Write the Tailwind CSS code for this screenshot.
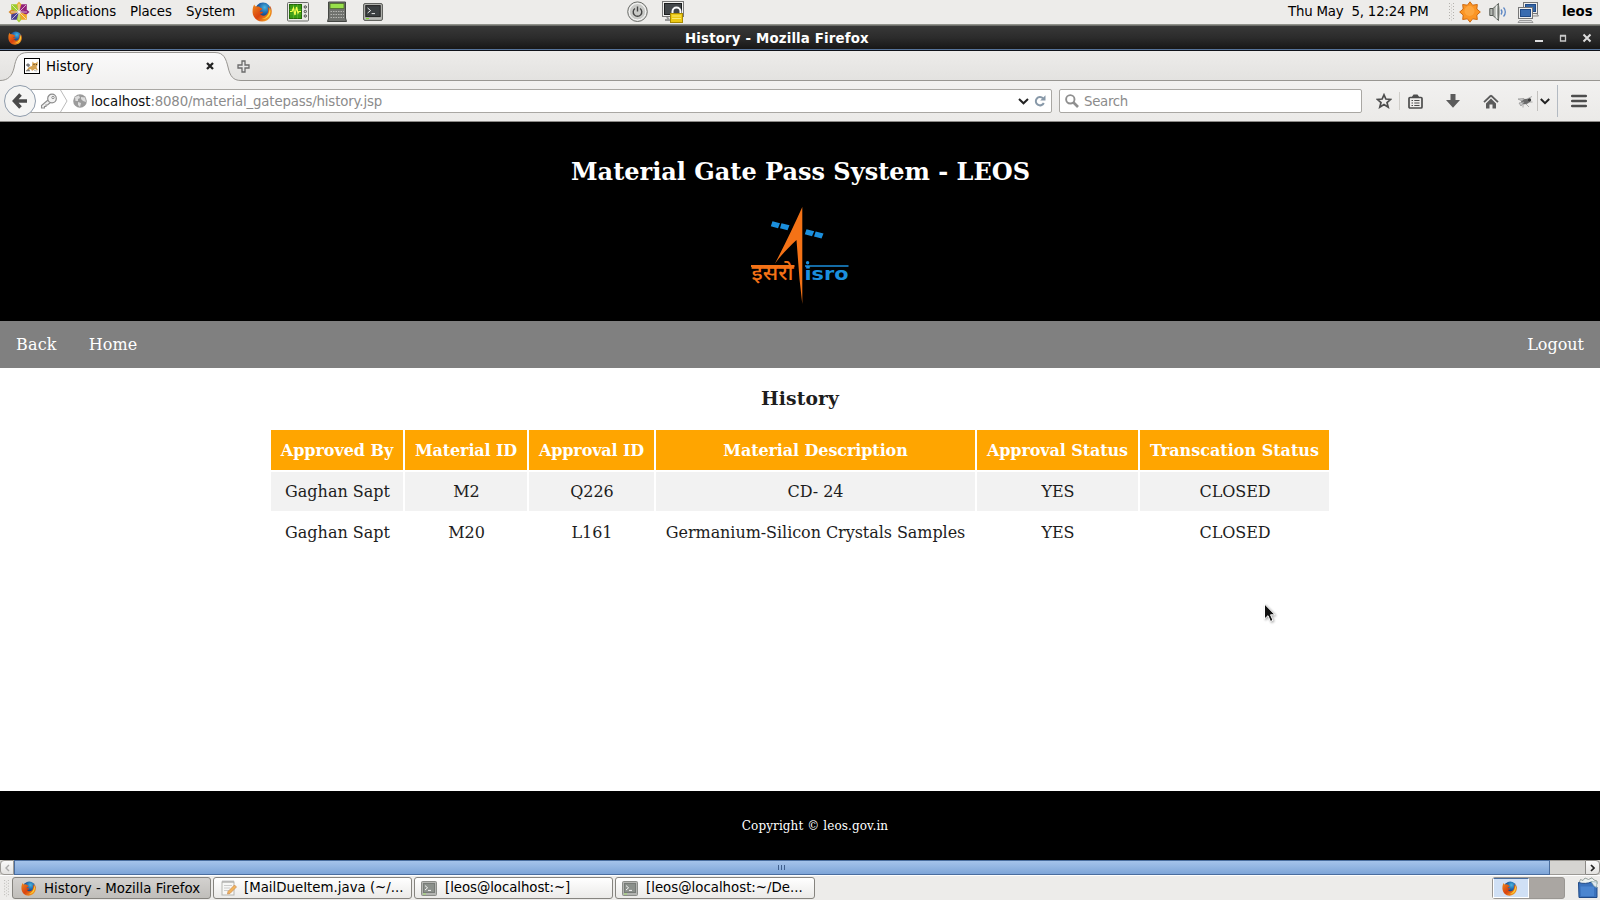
<!DOCTYPE html>
<html lang="en">
<head>
<meta charset="utf-8">
<title>History</title>
<script src="https://cdn.jsdelivr.net/npm/@tailwindcss/browser@4"></script>
</head>
<body class="w-[1600px] h-[900px] overflow-hidden bg-white font-['DejaVu_Sans',sans-serif] text-[13.33px] text-black">
<svg width="0" height="0" class="absolute">
  <defs>
    <radialGradient id="fg" cx=".6" cy=".3" r=".6"><stop offset="0" stop-color="#48b5e0"/><stop offset=".6" stop-color="#1d62a8"/><stop offset="1" stop-color="#123a77"/></radialGradient>
    <linearGradient id="fo" x1="0" y1="0" x2="1" y2="1"><stop offset="0" stop-color="#f08a1c"/><stop offset=".5" stop-color="#d9420f"/><stop offset="1" stop-color="#fbc02d"/></linearGradient>
    <linearGradient id="tabg" x1="0" y1="0" x2="0" y2="1"><stop offset="0" stop-color="#fafafa"/><stop offset="1" stop-color="#f2f1f0"/></linearGradient>
    <symbol id="firefox" viewBox="0 0 20 20">
      <circle cx="11" cy="8.6" r="8" fill="url(#fg)"/>
      <path d="M2.2 2.5 C2.8 4 3.6 4.6 4.8 4.6 C6.5 4.2 7.6 4.8 8.4 5.8 C9.8 6 10.4 6.6 10 7.4 C9 8.3 7.8 8.4 7.6 9.6 C8.6 10 9.6 9.2 11 10 C10.6 12 8.6 12 8 11.6 C9 13.8 12 14.4 14.2 12.8 C16.4 11 16.6 7.4 15.6 4.8 C17.4 6 18 7.4 18 8.6 C18.6 7 18.2 5 17.6 3.6 C20 6.4 20.4 10.6 18.8 14 C17 17.8 13.6 19.6 10 19.5 C5 19.4 1 15.6 .6 10.6 C.4 7 1 4.6 2.2 2.5Z" fill="url(#fo)"/>
      <path d="M17.6 5 C19.2 8 18.8 12 16.6 14.6 C14.8 16.6 12 17.4 10 17 C14 16.4 17.8 12.6 17.6 5Z" fill="#fdd835"/>
    </symbol>
    <symbol id="term" viewBox="0 0 20 18">
      <rect x=".6" y=".6" width="18.8" height="16.8" rx="1.4" fill="#b9bab6" stroke="#555753"/>
      <rect x="2.8" y="2.6" width="14.4" height="11" fill="#3b3f41" stroke="#222"/>
      <path d="M4.6 5 L7.6 7.6 L4.6 10 M8.6 10.6 H12" stroke="#e8e8e8" fill="none"/>
      <path d="M3 15.6 h3" stroke="#7ce01c"/>
    </symbol>
    <symbol id="termlite" viewBox="0 0 16 15">
      <rect x=".5" y=".5" width="15" height="14" rx="1" fill="#b4b5b2" stroke="#8b8d89"/>
      <rect x="2.5" y="2.5" width="11" height="9" fill="#8b908b" stroke="#777b77"/>
      <path d="M4 4.6 L6.6 6.8 L4 9 M7 9.4 H10" stroke="#f4f4f4" fill="none"/>
      <path d="M2 13 h3" stroke="#a2e06a"/>
    </symbol>
    <symbol id="grip" viewBox="0 0 5 18">
      <path d="M.5 0V18M4.5 0V18" stroke="#b3b1ad" stroke-dasharray="1 2"/><path d="M2.5 1.5V18" stroke="#c4c2be" stroke-dasharray="1 2"/>
    </symbol>
  </defs>
</svg>

<div class="flex h-full flex-col">
  <!-- desktop panel -->
  <div class="flex h-[25px] shrink-0 items-center border-b border-[#8f918a] bg-[#edecea] whitespace-nowrap">
    <svg class="ml-2 h-[22px] w-[22px]" viewBox="0 0 22 22">
      <g>
        <path d="M11 .5 L14 4 L11 10 L8 4Z" fill="#e8b23a"/><path d="M21.5 11 L18 8 L12 11 L18 14Z" fill="#932279"/>
        <path d="M11 21.5 L14 18 L11 12 L8 18Z" fill="#a8cc3a"/><path d="M.5 11 L4 8 L10 11 L4 14Z" fill="#d98a2a"/>
        <path d="M3.2 3.2H8.6L10.6 9.8L9.8 10.6L3.2 8.6Z" fill="#9ccd2a"/><path d="M18.800 3.200H13.400L11.400 9.800L12.200 10.600L18.800 8.600Z" fill="#932279"/>
        <path d="M3.200 18.800H8.600L10.600 12.200L9.800 11.400L3.200 13.400Z" fill="#4a3f8f"/><path d="M18.800 18.800H13.400L11.400 12.200L12.200 11.400L18.800 13.400Z" fill="#efa724"/>
        <path d="M4 4L18 18M18 4L4 18M11 3V19M3 11H19" stroke="#f4ecf2" stroke-width=".7"/>
      </g>
    </svg>
    <span class="ml-[6px] w-[94px] tracking-[-0.12px]">Applications</span>
    <span class="w-[56px] tracking-[-0.1px]">Places</span>
    <span class="w-[66px] tracking-[-0.1px]">System</span>
    <svg class="h-[20px] w-[20px]"><use href="#firefox"/></svg>
    <svg class="ml-[15px] h-[20px] w-[22px]" viewBox="0 0 22 20">
      <rect x=".5" y=".5" width="21" height="18.5" rx="1" fill="#e9e9e6" stroke="#6b6d69"/>
      <rect x="2.5" y="2.5" width="12" height="14" fill="#3a9a12" stroke="#246a08"/>
      <path d="M2.5 7.500H14.500M2.500 12H14.500M6.500 2.500V16.500M10.500 2.500V16.500" stroke="#61b53a" stroke-width=".6"/>
      <path d="M3 9.500H5L6.500 6L8 13L9.500 5L11 11L12 9.500H14" stroke="#f3ff4a" fill="none" stroke-width="1.200"/>
      <g fill="#c9cac6" stroke="#444" stroke-width=".9"><circle cx="18.300" cy="5" r="1.200"/><circle cx="18.300" cy="9.500" r="1.200"/><circle cx="18.300" cy="14" r="1.200"/></g>
    </svg>
    <svg class="ml-[18px] h-[22px] w-[20px]" viewBox="0 0 20 22">
      <path d="M1.500 1H18.500V17L19.500 20.500H.5L1.500 17Z" fill="#70726e" stroke="#454744"/>
      <rect x="3" y="2.500" width="14" height="5" fill="#98e04a" stroke="#4b6b2a" stroke-width=".8"/>
      <path d="M3.500 10.500H17M3.500 13.500H17M3.500 16.500H17" stroke="#b4b5b1" stroke-width="1.200" stroke-dasharray="1.500 1"/>
    </svg>
    <svg class="ml-[16px] h-[18px] w-[20px]"><use href="#term"/></svg>
    <svg class="ml-[244px] h-[22px] w-[22px]" viewBox="0 0 22 22">
      <circle cx="10.500" cy="10.700" r="9.800" fill="#dcdcda" stroke="#6d6f6b"/><circle cx="10.500" cy="10.700" r="8.200" fill="#c9cac7" stroke="#fff" stroke-width=".8"/>
      <path d="M8 7.500A4.300 4.300 0 1 0 13 7.500M10.500 5.500V10.500" stroke="#444" stroke-width="1.400" fill="none"/>
    </svg>
    <svg class="ml-[13px] h-[22px] w-[22px]" viewBox="0 0 22 22">
      <path d="M5 16L7 19H3" fill="none" stroke="#999" stroke-width="2"/>
      <rect x=".5" y=".5" width="21" height="15" fill="#f1f1ef" stroke="#777"/><rect x="2.500" y="2.500" width="17" height="11" fill="#43474a" stroke="#1d1f20"/>
      <path d="M10.500 13V10.500A4 4 0 0 1 18.500 10.500V13" fill="none" stroke="#fafafa" stroke-width="2"/>
      <rect x="8.500" y="12.500" width="12" height="9" fill="#ecc813" stroke="#a98a00"/><path d="M10 15H19M10 17.500H19" stroke="#f9ea70"/>
    </svg>
    <span class="ml-auto w-[161px] tracking-[-0.2px] whitespace-pre">Thu May  5, 12:24 PM</span>
    <svg class="h-[18px] w-[5px]"><use href="#grip"/></svg>
    <svg class="ml-[5px] h-[22px] w-[22px]" viewBox="0 0 22 22">
      <path d="M11 .8L13.600 4.200L18.300 3.500L17.800 8L21.300 11L17.800 14L18.300 18.500L13.600 17.800L11 21.200L8.400 17.800L3.700 18.500L4.200 14L.7 11L4.200 8L3.700 3.500L8.400 4.200Z" fill="#fb9524" stroke="#cf6a10"/>
      <circle cx="10.500" cy="10" r="5" fill="#fdae4c" opacity=".7"/>
    </svg>
    <svg class="ml-[8px] h-[20px] w-[20px]" viewBox="0 0 20 20">
      <path d="M.8 6.500H4L9.500 1.500V18.500L4 13.500H.8Z" fill="#b4b8b2" stroke="#555b55"/><path d="M4 7V13" stroke="#555"/><path d="M7.500 3.500V16.500" stroke="#edefec" stroke-width="1.500"/><ellipse cx="9.500" cy="10" rx="1" ry="8" fill="#6f746e"/>
      <path d="M12 7.500A4 4 0 0 1 12 12.500M14.500 5.500A6.500 6.500 0 0 1 14.500 14.500" fill="none" stroke="#5b86c4" stroke-width="1.300"/>
    </svg>
    <svg class="ml-[8px] h-[21px] w-[22px]" viewBox="0 0 22 21">
      <rect x="6.500" y=".5" width="14" height="11" fill="#eee" stroke="#777"/><rect x="8.500" y="2.500" width="10" height="7" fill="#3465a4" stroke="#204a87"/><path d="M15 14H21.500L20 12" fill="#ddd" stroke="#888"/>
      <rect x="1.500" y="5.500" width="14" height="11" fill="#eee" stroke="#777"/><rect x="3.500" y="7.500" width="10" height="7" fill="#3a6cb0" stroke="#204a87"/><path d="M2.500 18.500H14.500L16 20.500H1Z" fill="#ddd" stroke="#888" stroke-width=".8"/>
    </svg>
    <span class="ml-[23px] w-[38px] font-bold">leos</span>
  </div>

  <!-- window title bar -->
  <div class="flex h-[26px] shrink-0 items-center border-t border-b border-t-[#6c6d69] border-b-[#10131a] bg-linear-to-b from-[#383838] via-[#2b2b2b] to-[#161616] text-white shadow-[inset_0_-1px_0_#56749b]">
    <svg class="ml-2 h-[14px] w-[14px]"><use href="#firefox"/></svg>
    <span class="ml-[663px] w-[850px] translate-y-px font-bold tracking-[0.17px] whitespace-nowrap">History - Mozilla Firefox</span>
    <svg class="h-[12px] w-[58px]" viewBox="0 0 58 12">
      <path d="M0 9H8" stroke="#ddd" stroke-width="2"/><path d="M25.500 4H30.500V9H25.500ZM25 3.500H31" stroke="#c8c8c8" fill="none" stroke-width="1.300"/><path d="M48.500 2.500L55.500 9.500M55.500 2.500L48.500 9.500" stroke="#ddd" stroke-width="2"/>
    </svg>
  </div>

  <!-- tab strip -->
  <div class="relative flex h-[30px] shrink-0 items-center bg-linear-to-b from-[#edecea] to-[#e3e2e0]">
    <svg class="absolute inset-0 h-[30px] w-[1600px]" viewBox="0 0 1600 30">
      <path d="M0 29.500C8 29.500 12 25 14 17C16 7 18 1.500 28 1.500H215C224 1.500 226 8 228 16C230 25 233 29.500 241 29.500H1600V31H0Z" fill="url(#tabg)" stroke="#989692"/>
    </svg>
    <div class="relative flex items-center pt-px whitespace-nowrap">
      <svg class="ml-6 h-[16px] w-[16px]" viewBox="0 0 16 16">
        <rect x=".5" y=".5" width="15" height="15" fill="#fff" stroke="#000"/>
        <path d="M2 13L5 9L8 8L8.500 3.500L10 5H12L13.700 3.500L13.500 7L12.500 9L14 12.500L11 11L8 13L7 11Z" fill="#d3a253"/><path d="M2 7L4 5.500L6 7L4.500 9ZM2 13L4.500 11.500L6 13ZM10 12.500L13 13" fill="#777" stroke="#777" stroke-width=".5"/><path d="M9.500 6.500H10.500M12 6.500H13" stroke="#5a3f18"/>
      </svg>
      <span class="ml-[6px] w-[160px]">History</span>
      <svg class="h-[8px] w-[8px]" viewBox="0 0 8 8"><path d="M1 1L7 7M7 1L1 7" stroke="#222" stroke-width="2.300"/></svg>
      <svg class="ml-[23px] h-[13px] w-[13px]" viewBox="0 0 13 13"><path d="M5 1H8V5H12V8H8V12H5V8H1V5H5Z" fill="#e8e8e8" stroke="#6b6b6b" stroke-width="1.300"/></svg>
    </div>
  </div>

  <!-- navigation toolbar -->
  <div class="flex h-[41px] shrink-0 items-center border-b border-[#8c8a87] bg-linear-to-b from-[#f2f1f0] to-[#ebeae8] whitespace-nowrap">
    <svg class="z-10 ml-1 h-[32px] w-[32px]" viewBox="0 0 32 32">
      <circle cx="16" cy="16" r="15.500" fill="#f5f5f4" stroke="#8e9bab"/>
      <path d="M16.500 9.500L10.500 16L16.500 22.500M11 16H23" fill="none" stroke="#4a4a4a" stroke-width="3.600"/>
    </svg>
    <div class="-ml-[6px] flex h-[24px] w-[1022px] items-center rounded-r-[2px] border border-[#a9a7a3] bg-white">
      <svg class="ml-[9px] h-[16px] w-[18px]" viewBox="0 0 18 16"><path d="M8 7L1.500 12.500V15H4.500V13.500H6V12H7.500L10.500 9.500" fill="#eee" stroke="#8c8c8c" stroke-width="1.100"/><circle cx="12" cy="5.500" r="4.300" fill="#f2f2f2" stroke="#8c8c8c" stroke-width="1.200"/><circle cx="13" cy="4.500" r="1.200" fill="#fff" stroke="#8c8c8c"/></svg>
      <svg class="ml-[2px] h-[22px] w-[8px]" viewBox="0 0 8 22"><path d="M.5 0L7 11L.5 22" fill="none" stroke="#bbb"/></svg>
      <svg class="ml-[5px] h-[14px] w-[14px]" viewBox="0 0 14 14"><circle cx="7" cy="7" r="6.800" fill="#9b9b9b"/><path d="M2 3L6 1.500L7 4L5 5L5 7L2.500 7ZM8 3L12 3.500L13 8L10 7L8 5ZM5 8L8 9L7 13L5 11Z" fill="#dcdcdc"/></svg>
      <span class="ml-[4px] w-[927px] translate-y-px tracking-[-0.17px] text-[#8b8b8b]"><span class="tracking-[-0.05px] text-[#111]">localhost</span>:8080/material_gatepass/history.jsp</span>
      <svg class="h-[7px] w-[11px]" viewBox="0 0 11 7"><path d="M1 1L5.500 5.300L10 1" fill="none" stroke="#222" stroke-width="2"/></svg>
      <svg class="ml-[5px] h-[12px] w-[12px]" viewBox="0 0 12 12"><path d="M9 3.200A4.200 4.200 0 1 0 9.800 8" fill="none" stroke="#8798a8" stroke-width="2"/><path d="M11.500 .3V5.600H6.200Z" fill="#8798a8"/></svg>
    </div>
    <div class="ml-[7px] flex h-[24px] w-[303px] items-center rounded-[2px] border border-[#a9a7a3] bg-white">
      <svg class="ml-[5px] h-[14px] w-[14px]" viewBox="0 0 14 14"><circle cx="5.300" cy="5.300" r="4.200" fill="none" stroke="#8f8f8f" stroke-width="1.900"/><path d="M8.500 8.500L13 13" stroke="#8f8f8f" stroke-width="2.600"/></svg>
      <span class="ml-[5px] translate-y-px tracking-[-0.3px] text-[#8b8b8b]">Search</span>
    </div>
    <svg class="ml-[14px] h-[16px] w-[16px]" viewBox="0 0 16 16"><path d="M8 1.800L9.900 6L14.600 6.400L11 9.500L12.200 14.200L8 11.600L3.800 14.200L5 9.500L1.400 6.400L6.100 6Z" fill="none" stroke="#4d4d4d" stroke-width="1.700"/></svg>
    <div class="ml-[7px] h-[18px] w-px bg-[#d0ceca]"></div>
    <svg class="ml-[8px] h-[15px] w-[15px]" viewBox="0 0 15 15"><rect x="1" y="3.500" width="13" height="10.500" rx="1" fill="none" stroke="#4d4d4d" stroke-width="1.700"/><path d="M3.500 3.500L5.500 .5H9.500L11.500 3.500Z" fill="#4d4d4d"/><path d="M3.500 6.500H5M3.500 9H5M3.500 11.500H5M6.300 6.500H11.500M6.300 9H11.500M6.300 11.500H11.500" stroke="#4d4d4d" stroke-width="1.200"/></svg>
    <svg class="ml-[23px] h-[14px] w-[14px]" viewBox="0 0 14 14"><path d="M4.500 0H9.500V6H14L7 13.800L0 6H4.500Z" fill="#5b5b5b"/></svg>
    <svg class="ml-[23px] h-[15px] w-[16px]" viewBox="0 0 16 15"><path d="M8 1.500L1 8.200M8 1.500L15 8.200" fill="none" stroke="#5b5b5b" stroke-width="1.800"/><path d="M8 4.600L13 9.400V14.500H9.500V10.500H6.500V14.500H3V9.400Z" fill="#5b5b5b"/></svg>
    <svg class="ml-[18px] h-[13px] w-[16px]" viewBox="0 0 16 13"><ellipse cx="8.500" cy="6.500" rx="4.500" ry="2.500" transform="rotate(-15 8.500 6.500)" fill="#6a6a6a"/><path d="M1 4L7 3.500L5 6ZM2 8L7 7L4 11ZM10 4L15 1.500M11 7L15.500 7M9 9L12 12M6 9L6 12.500M12 4L13.500 4" fill="#ccc" stroke="#999" stroke-width=".8"/><circle cx="12.500" cy="5" r="1.700" fill="#3d3d3d"/></svg>
    <div class="ml-[4px] h-[20px] w-px bg-[#c3c1be]"></div>
    <svg class="ml-[2px] h-[7px] w-[10px]" viewBox="0 0 10 7"><path d="M.8 1L5 5.200L9.200 1" fill="none" stroke="#222" stroke-width="2"/></svg>
    <div class="ml-[7px] h-[32px] w-px bg-[#b3bac2]"></div>
    <svg class="ml-[13px] h-[14px] w-[16px]" viewBox="0 0 16 14"><path d="M1.200 2H14.800M1.200 7H14.800M1.200 12H14.800" stroke="#4d4d4d" stroke-width="2.600" stroke-linecap="round"/></svg>
  </div>

  <!-- web page -->
  <div class="flex h-[738px] shrink-0 flex-col bg-white font-['DejaVu_Serif',serif] text-base text-[#1d1d1d]">
    <header class="flex h-[199px] shrink-0 flex-col items-center bg-black pt-[36px] text-white">
      <h1 class="pl-px text-2xl leading-[28px] font-bold">Material Gate Pass System - LEOS</h1>
      <svg class="mt-[20px] h-[100px] w-[100px]" viewBox="0 0 100 100" role="img" aria-label="ISRO">
        <path d="M52.300 1V98L49.500 73L46.500 34C39 41 32 48 25 57.500C34 40 43 22 52.300 1Z" fill="#f47216"/>
        <path d="M22.500 15.200L30 17.200L28 22.200L20.800 20.200ZM31.500 17.200L39.500 19.200L37.500 24.200L30 22.200ZM56.500 23.200L64.200 25.200L62 30.200L54.800 28.200ZM65.700 25.400L73.500 27.400L71.500 32.400L64 30.400Z" fill="#1b8fdd"/>
        <path d="M1 60H44.500" stroke="#f47216" stroke-width="2"/>
        <path d="M55 60H98.500" stroke="#1b8fdd" stroke-width="1.600"/>
        <circle cx="57.600" cy="56.800" r="1.700" fill="#1b8fdd"/>
        <text x="1.500" y="74" font-size="21" font-weight="500" textLength="42" lengthAdjust="spacingAndGlyphs" fill="#f47216" font-family="Noto Sans Devanagari, Lohit Devanagari, FreeSans, sans-serif">इसरो</text>
        <text x="54.500" y="74" font-size="18" font-weight="bold" textLength="44" lengthAdjust="spacingAndGlyphs" fill="#1b8fdd" font-family="DejaVu Sans, sans-serif">isro</text>
      </svg>
    </header>
    <nav class="flex h-[47px] shrink-0 items-center bg-[#808080] px-4 text-white">
      <a class="mr-8 tracking-[0.2px]">Back</a><a class="tracking-[0.1px]">Home</a><a class="ml-auto">Logout</a>
    </nav>
    <main class="h-[423px] shrink-0 pt-[18px]">
      <h2 class="text-center text-[18.72px] leading-[24px] font-bold tracking-[0.1px]">History</h2>
      <table class="mx-auto mt-[18px] w-[1062px] table-fixed border-separate border-spacing-[2px] text-center tracking-[-0.06px] whitespace-nowrap">
        <colgroup><col class="w-[132px]"><col class="w-[122px]"><col class="w-[125px]"><col class="w-[319px]"><col class="w-[161px]"><col class="w-[189px]"></colgroup>
        <tr class="h-[40px] bg-[#ffa500] text-white"><th class="pt-[2px]">Approved By</th><th class="pt-[2px] tracking-[-0.14px]">Material ID</th><th class="pt-[2px] tracking-[-0.14px]">Approval ID</th><th class="pt-[2px] tracking-[-0.1px]">Material Description</th><th class="pt-[2px] tracking-[-0.1px]">Approval Status</th><th class="pt-[2px] tracking-normal">Transcation Status</th></tr>
        <tr class="h-[39px] bg-[#f2f2f2]"><td class="pl-px tracking-normal">Gaghan Sapt</td><td class="pl-px">M2</td><td class="pl-px">Q226</td><td>CD- 24</td><td class="pl-px">YES</td><td class="pl-px">CLOSED</td></tr>
        <tr class="h-[39px]"><td class="pl-px tracking-normal">Gaghan Sapt</td><td class="pl-px">M20</td><td class="pl-px">L161</td><td>Germanium-Silicon Crystals Samples</td><td class="pl-px">YES</td><td class="pl-px">CLOSED</td></tr>
      </table>
    </main>
    <footer class="flex h-[69px] shrink-0 items-center justify-center bg-black pl-[30px] text-xs tracking-[0.1px] text-white">Copyright © leos.gov.in</footer>
  </div>

  <!-- horizontal scrollbar -->
  <div class="flex h-[15px] shrink-0 bg-[#d5d4d1]">
    <div class="flex w-[14px] items-center justify-center rounded-l border border-[#9b9995] bg-linear-to-b from-[#fafafa] to-[#e3e2e0]"><svg class="h-[8px] w-[5px]" viewBox="0 0 5 8"><path d="M4 1L1 4L4 7" fill="none" stroke="#aaa" stroke-width="1.400"/></svg></div>
    <div class="flex w-[1536px] items-center justify-center border border-[#4a6d9e] bg-linear-to-b from-[#a5c3ea] to-[#7ea5d8]"><svg class="mr-[2px] h-[5px] w-[7px]" viewBox="0 0 7 5"><path d="M.5 0V5M3.500 0V5M6.500 0V5" stroke="#3f5f8d"/></svg></div>
    <div class="flex-1 border-y border-[#9b9995]"></div>
    <div class="flex w-[15px] items-center justify-center rounded-r border border-[#8b8985] bg-linear-to-b from-[#fafafa] to-[#e3e2e0]"><svg class="h-[8px] w-[5px]" viewBox="0 0 5 8"><path d="M1 1L4 4L1 7" fill="none" stroke="#222" stroke-width="1.700"/></svg></div>
  </div>

  <!-- task bar -->
  <div class="flex h-[25px] shrink-0 items-center gap-[2px] border-t border-white bg-[#edecea] whitespace-nowrap">
    <svg class="mr-[2px] ml-1 h-[17px] w-[5px]"><use href="#grip"/></svg>
    <div class="ml-[-1px] flex h-[22px] w-[199px] items-center rounded-[3px] border border-[#86847f] bg-linear-to-b from-[#d3d1cf] to-[#c0beba]"><svg class="mt-px ml-[8px] h-[15px] w-[15px]"><use href="#firefox"/></svg><span class="ml-[8px] translate-y-px tracking-[0.05px]">History - Mozilla Firefox</span></div>
    <div class="flex h-[22px] w-[199px] items-center rounded-[3px] border border-[#86847f] bg-linear-to-b from-white to-[#ebeae8]">
      <svg class="ml-[7px] h-[16px] w-[16px]" viewBox="0 0 16 16"><rect x="1" y="2" width="12" height="13" fill="#f7f7f5" stroke="#b5b5b0"/><path d="M1.500 1.500H13" stroke="#999" stroke-width="2" stroke-dasharray="1 1"/><path d="M3 5.500H11M3 8H9M3 10.500H8" stroke="#ccc"/><path d="M13.500 5L15.500 7L9 13.500L6.500 14L7 11.500Z" fill="#f2b45c" stroke="#c98a55" stroke-width=".7"/></svg>
      <span class="ml-[7px]">[MailDueItem.java (~/...</span></div>
    <div class="flex h-[22px] w-[199px] items-center rounded-[3px] border border-[#86847f] bg-linear-to-b from-white to-[#ebeae8]"><svg class="ml-[6px] h-[15px] w-[16px]"><use href="#termlite"/></svg><span class="ml-[8px] tracking-[-0.06px]">[leos@localhost:~]</span></div>
    <div class="flex h-[22px] w-[200px] items-center rounded-[3px] border border-[#86847f] bg-linear-to-b from-white to-[#ebeae8]"><svg class="ml-[6px] h-[15px] w-[16px]"><use href="#termlite"/></svg><span class="ml-[8px]">[leos@localhost:~/De...</span></div>
    <div class="ml-auto flex h-[22px] w-[73px] rounded-[3px] border border-[#9a9793] bg-[#aaa6a2]"><div class="flex w-[36px] items-center justify-center border border-white border-t-[#4a6d9e] bg-[#d0e0f5]"><svg class="mr-[3px] h-[15px] w-[15px]"><use href="#firefox"/></svg></div></div>
    <svg class="mr-[2px] ml-[10px] h-[22px] w-[21px]" viewBox="0 0 21 22"><path d="M2 6L3.500 2.500L6 3.500L8 1L11.500 2.500L15 .8L17 3L20 4V7L3 8Z" fill="#eef3f1" stroke="#7f8a86" stroke-width=".8"/><path d="M1.500 5.500C6 7 11 6.500 14.500 5L17 9L20 10V20.500H2Z" fill="#3a72bd" stroke="#204a87"/><path d="M3.500 9.500H17V19H4Z" fill="#4a85d0"/><path d="M14 4.500L20 5L19.500 10.500L17 9Z" fill="#dfe8f2" stroke="#8aa" stroke-width=".7"/></svg>
  </div>
</div>

<!-- mouse pointer -->
<svg class="absolute top-[603px] left-[1263px] h-[21px] w-[14px] drop-shadow-[1px_1px_1px_rgba(0,0,0,.35)]" viewBox="0 0 14 21"><path d="M1.500 1V16L5 12.700L7.500 18.500L10 17.300L7.500 11.800H12Z" fill="#111" stroke="#fff"/></svg>
</body>
</html>
